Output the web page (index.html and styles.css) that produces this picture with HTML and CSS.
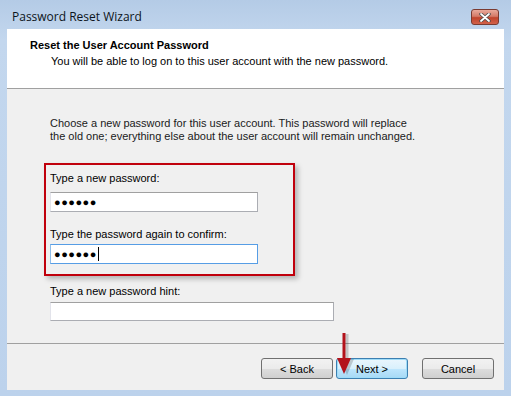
FILE: index.html
```html
<!DOCTYPE html>
<html lang="en">
<head>
    <meta charset="UTF-8">
    <title>Password Reset Wizard</title>
    <link rel="stylesheet" href="styles.css">
</head>
<body>

    <div class="window">
        <div class="titlebar">
            <span class="title">Password Reset Wizard</span>
            <span class="close-btn">
                <svg width="12" height="9" viewBox="0 0 12 9">
                    <path d="M2 1 L10 8 M10 1 L2 8" stroke="#4a4a4a" stroke-width="3.4" stroke-linecap="round"/>
                    <path d="M2 1 L10 8 M10 1 L2 8" stroke="#ffffff" stroke-width="1.8" stroke-linecap="round"/>
                </svg>
            </span>
        </div>

        <div class="client">
            <div class="wizard-header">
                <h1>Reset the User Account Password</h1>
                <p>You will be able to log on to this user account with the new password.</p>
            </div>

            <div class="wizard-body">
                <p class="intro">Choose a new password for this user account. This password will replace<br>
                the old one; everything else about the user account will remain unchanged.</p>

                <!-- highlighted fields -->
                <div class="highlight">
                    <label class="first-label">Type a new password:</label>
                    <div class="field first-field">&#9679;&#9679;&#9679;&#9679;&#9679;&#9679;</div>
                    <label class="second-label">Type the password again to confirm:</label>
                    <div class="field focused">&#9679;&#9679;&#9679;&#9679;&#9679;&#9679;<span class="caret"></span></div>
                </div>

                <label class="hint-label">Type a new password hint:</label>
                <div class="field hint-field"></div>
            </div>

            <div class="wizard-footer">
                <button class="btn">&lt; Back</button>
                <button class="btn default">Next &gt;</button>
                <button class="btn cancel">Cancel</button>

                <!-- annotation arrow -->
                <svg class="arrow" width="20" height="44" viewBox="0 0 20 44">
                    <path d="M10 0 V26" stroke="rgba(0,0,0,0.18)" stroke-width="3" transform="translate(2,1)"/>
                    <path d="M3 25 L17 25 L10 41 Z" fill="rgba(0,0,0,0.18)" transform="translate(2,1)"/>
                    <path d="M9 0 V26" stroke="#b3131b" stroke-width="3"/>
                    <path d="M2 25 L16 25 L9 41 Z" fill="#b3131b"/>
                </svg>
            </div>
        </div>
    </div>

</body>
</html>
```

FILE: styles.css
```css
body {
    margin: 0;
    font-family: "Liberation Sans", Arial, sans-serif;
    font-size: 11px;
    color: #000;
}

.window {
    width: 511px;
    height: 396px;
    box-sizing: border-box;
    padding: 0 7px 6px 7px;
    background: linear-gradient(to bottom, #b4cbe6 0px, #c3d7ee 40px, #bcd2ec 100%);
    display: flex;
    flex-direction: column;
}

.titlebar {
    height: 29px;
    display: flex;
    align-items: flex-start;
    justify-content: space-between;
}

.title {
    font-family: "Open Sans", "Noto Sans", sans-serif;
    font-size: 12px;
    line-height: 16px;
    color: #0c1420;
    margin-left: 5px;
    margin-top: 9px;
}

.close-btn {
    width: 28px;
    height: 16px;
    box-sizing: border-box;
    margin-right: 5px;
    margin-top: 9px;
    border: 1px solid #7a3b31;
    border-radius: 3px;
    background: linear-gradient(to bottom, #e9a99b 0%, #d47a68 45%, #c0432c 55%, #d2624a 100%);
    display: flex;
    align-items: center;
    justify-content: center;
}

.client {
    flex: 1;
    background-color: #f0f0f0;
    display: flex;
    flex-direction: column;
}

.wizard-header {
    height: 60px;
    box-sizing: border-box;
    background-color: #fff;
    border-bottom: 1px solid #a0a0a0;
    padding: 10px 0 0 23px;
}

.wizard-header h1 {
    margin: 0;
    font-size: 11px;
    font-weight: bold;
    line-height: 13px;
}

.wizard-header p {
    margin: 3px 0 0 21px;
    line-height: 13px;
}

.wizard-body {
    padding: 28px 0 0 37px;
    height: 255px;
    box-sizing: border-box;
    border-bottom: 1px solid #a0a0a0;
}

.intro {
    margin: 0 0 0 6px;
    line-height: 13px;
    color: #1a1a1a;
}

label {
    display: block;
    line-height: 13px;
}

.highlight {
    margin-top: 20px;
    width: 251px;
    height: 113px;
    box-sizing: border-box;
    border: 2px solid #c0000c;
    padding: 7px 0 0 4px;
    box-shadow: 3px 3px 5px rgba(0, 0, 0, 0.25);
}

.field {
    width: 208px;
    height: 20px;
    box-sizing: border-box;
    background-color: #fff;
    border: 1px solid #abadb3;
    border-top-color: #a0a0a0;
    border-left-color: #e2e3ea;
    font-size: 11px;
    letter-spacing: 0.5px;
    line-height: 18px;
    padding-left: 3px;
    display: flex;
    align-items: center;
}

.first-field {
    margin-top: 7px;
}

.second-label {
    margin-top: 16px;
}

.highlight .focused {
    margin-top: 3px;
    border-color: #569de5;
    border-left-color: #8fbde9;
}

.caret {
    width: 1px;
    height: 14px;
    background-color: #000;
    margin-left: 1px;
}

.hint-label {
    margin: 9px 0 0 6px;
}

.hint-field {
    margin: 4px 0 0 6px;
    width: 284px;
    height: 19px;
}

.wizard-footer {
    position: relative;
    display: flex;
    padding: 14px 0 0 254px;
}

.btn {
    width: 72px;
    height: 21px;
    box-sizing: border-box;
    border: 1px solid #707070;
    border-radius: 3px;
    background: linear-gradient(to bottom, #f2f2f2 0%, #ebebeb 50%, #dddddd 51%, #cfcfcf 100%);
    font-family: "Liberation Sans", Arial, sans-serif;
    font-size: 11px;
    color: #000;
    padding: 0;
    margin-right: 3px;
}

.btn.default {
    border-color: #3c7fb1;
    background: linear-gradient(to bottom, #eaf6fd 0%, #d9f0fc 50%, #bee6fd 51%, #a7d9f5 100%);
    box-shadow: inset 0 0 0 1px #9fdcf8;
}

.btn.cancel {
    margin-left: 11px;
}

.arrow {
    position: absolute;
    left: 328px;
    top: -11px;
}
```
